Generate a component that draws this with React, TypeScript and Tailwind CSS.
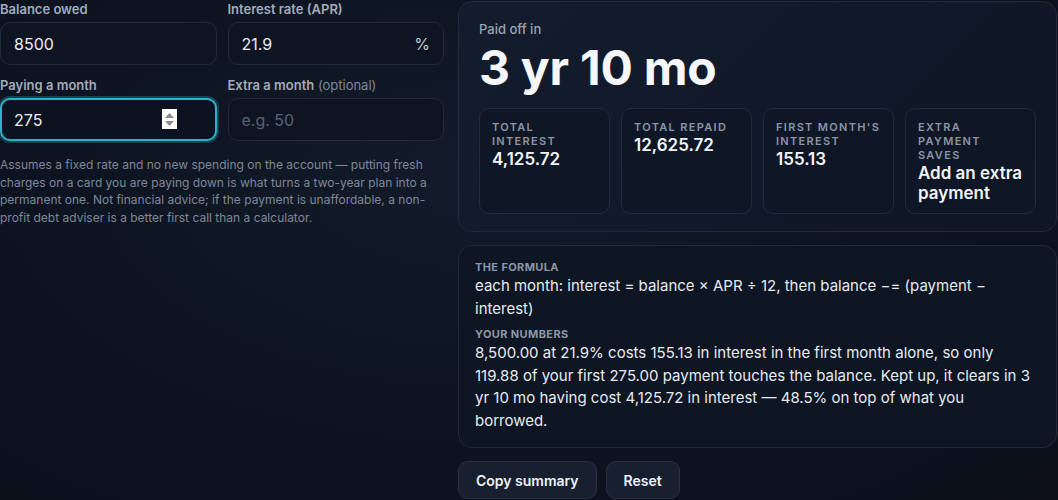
import React from "react";

const font = { fontFamily: "Inter, 'Noto Sans', sans-serif" };

function Field({
  label,
  optional,
  value,
  placeholder,
  suffix,
  focused,
}: {
  label: string;
  optional?: string;
  value?: string;
  placeholder?: string;
  suffix?: string;
  focused?: boolean;
}) {
  return (
    <div className="flex flex-col">
      <div className="text-[13px] leading-[17px] font-semibold text-[#a2acba] mb-[4px]">
        {label}
        {optional && <span className="font-normal text-[#7c8797]"> {optional}</span>}
      </div>
      <div
        className={
          focused
            ? "relative h-[43px] rounded-[10px] border-2 border-[#2bb3c9] bg-[#0c1220] shadow-[0_0_0_2px_rgba(34,150,170,0.35)] flex items-center px-[12px]"
            : "relative h-[43px] rounded-[10px] border border-[#222a38] bg-[#0e1422] flex items-center px-[13px]"
        }
      >
        <span className={value ? "text-[16px] text-[#e8edf3]" : "text-[16px] text-[#586273]"}>
          {value ?? placeholder}
        </span>
        {suffix && <span className="ml-auto text-[16px] text-[#c2cad5]">{suffix}</span>}
        {focused && (
          <div className="absolute right-[38px] top-[9px] w-[15px] h-[20px] bg-white flex flex-col items-center justify-center gap-[3px]">
            <svg width="9" height="5" viewBox="0 0 9 5">
              <polygon points="4.5,0 9,5 0,5" fill="#8a8a8a" />
            </svg>
            <svg width="9" height="5" viewBox="0 0 9 5">
              <polygon points="0,0 9,0 4.5,5" fill="#8a8a8a" />
            </svg>
          </div>
        )}
      </div>
    </div>
  );
}

function Stat({ label, value }: { label: React.ReactNode; value: React.ReactNode }) {
  return (
    <div className="rounded-[10px] border border-[#222b3a] bg-[#0f1626]/80 px-[12px] pt-[11px] pb-[10px]">
      <div className="text-[11px] leading-[14px] font-semibold tracking-[0.12em] uppercase text-[#8a95a6]">
        {label}
      </div>
      <div className="text-[17px] leading-[20px] font-semibold text-[#f1f5f9] mt-[1px]">{value}</div>
    </div>
  );
}

export default function App() {
  return (
    <div
      style={font}
      className="w-[1058px] h-[500px] overflow-hidden bg-[radial-gradient(ellipse_at_45%_35%,#131b2a_0%,#0d1320_55%,#0a0f1a_100%)]"
    >
      <div className="grid grid-cols-[444px_599px] gap-[14px] pt-[1px]">
        <div className="flex flex-col">
          <div className="grid grid-cols-2 gap-x-[11px] gap-y-[12px]">
            <Field label="Balance owed" value="8500" />
            <Field label="Interest rate (APR)" value="21.9" suffix="%" />
            <Field label="Paying a month" value="275" focused />
            <Field label="Extra a month" optional="(optional)" placeholder="e.g. 50" />
          </div>
          <p className="mt-[15px] text-[12px] leading-[17.5px] text-[#7d8898]">
            Assumes a fixed rate and no new spending on the account — putting fresh charges on a card you are
            paying down is what turns a two-year plan into a permanent one. Not financial advice; if the payment
            is unaffordable, a non-profit debt adviser is a better first call than a calculator.
          </p>
        </div>

        <div className="flex flex-col">
          <div className="rounded-[14px] border border-[#212a39] bg-[linear-gradient(135deg,#131c2c,#0f1727)] px-[20px] pt-[17px] pb-[17px]">
            <div className="text-[13px] leading-[20px] font-medium text-[#9aa5b5]">Paid off in</div>
            <div className="text-[48px] leading-[58px] font-bold text-[#f5f7fa] tracking-[-0.005em] mb-[11px]">
              3 yr 10 mo
            </div>
            <div className="grid grid-cols-4 gap-[11px]">
              <Stat label={<>Total<br />interest</>} value="4,125.72" />
              <Stat label="Total repaid" value="12,625.72" />
              <Stat label={<>First month's<br />interest</>} value="155.13" />
              <Stat
                label={<>Extra<br />payment<br />saves</>}
                value={<>Add an extra<br />payment</>}
              />
            </div>
          </div>

          <div className="mt-[13px] rounded-[14px] border border-[#212a39] bg-[#0e1523] px-[16px] pt-[13px] pb-[15px]">
            <div className="text-[11px] leading-[16px] font-bold tracking-[0.035em] uppercase text-[#8c97a7]">
              The formula
            </div>
            <div className="text-[15px] leading-[22.5px] text-[#e6ebf1]">
              each month: interest = balance × APR ÷ 12, then balance −= (payment − interest)
            </div>
            <div className="mt-[6px] text-[11px] leading-[16px] font-bold tracking-[0.035em] uppercase text-[#8c97a7]">
              Your numbers
            </div>
            <div className="text-[15px] leading-[22.5px] text-[#e6ebf1]">
              8,500.00 at 21.9% costs 155.13 in interest in the first month alone, so only 119.88 of your first
              275.00 payment touches the balance. Kept up, it clears in 3 yr 10 mo having cost 4,125.72 in
              interest — 48.5% on top of what you borrowed.
            </div>
          </div>

          <div className="mt-[13px] flex gap-[9px]">
            <button className="h-[38px] px-[17px] rounded-[10px] border border-[#2a3342] bg-[#182030] text-[14px] font-semibold text-[#eef2f6]">
              Copy summary
            </button>
            <button className="h-[38px] px-[17px] rounded-[10px] border border-[#2a3342] bg-[#182030] text-[14px] font-semibold text-[#eef2f6]">
              Reset
            </button>
          </div>
        </div>
      </div>
    </div>
  );
}
